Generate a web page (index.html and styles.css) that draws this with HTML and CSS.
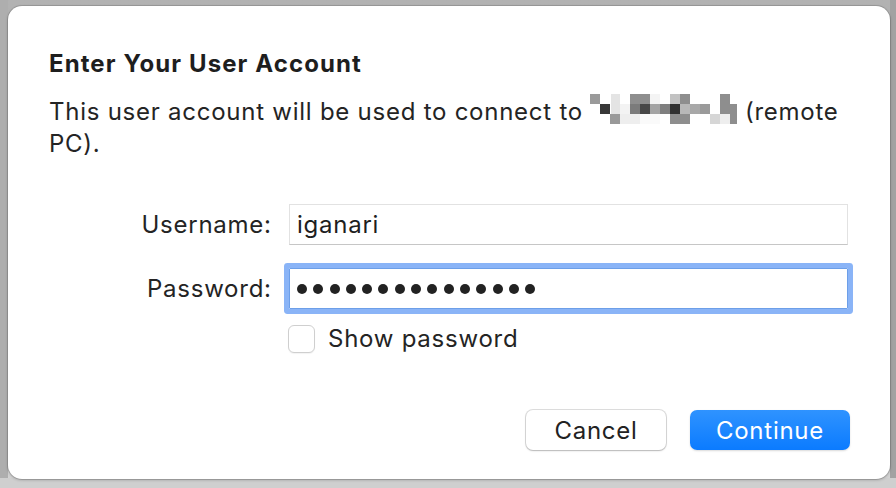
FILE: index.html
```html
<!DOCTYPE html>
<html>
<head>
<meta charset="utf-8">
<link rel="stylesheet" href="styles.css">
</head>
<body>
<div class="backdrop">
  <div class="dialog">
    <h1 class="title">Enter Your User Account</h1>
    <p class="message">This user account will be used to connect to <svg class="mosaic" width="147" height="30" viewBox="0 0 147 30" aria-hidden="true">
      <rect x="0" y="0" width="10" height="10" fill="#9a9a9a"/>
      <rect x="21" y="0" width="9" height="20" fill="#e4e4e4"/>
      <rect x="40" y="0" width="20" height="10" fill="#8e8e8e"/>
      <rect x="60" y="0" width="10" height="10" fill="#f4f4f4"/>
      <rect x="80" y="0" width="10" height="10" fill="#c2c2c2"/>
      <rect x="90" y="0" width="10" height="10" fill="#8e8e8e"/>
      <rect x="130" y="0" width="10" height="20" fill="#8e8e8e"/>
      <rect x="10" y="10" width="10" height="10" fill="#383838"/>
      <rect x="30" y="10" width="10" height="10" fill="#f3f3f3"/>
      <rect x="40" y="10" width="10" height="10" fill="#7b7b7b"/>
      <rect x="50" y="10" width="10" height="10" fill="#474747"/>
      <rect x="60" y="10" width="10" height="10" fill="#a4a4a4"/>
      <rect x="70" y="10" width="10" height="10" fill="#7f7f7f"/>
      <rect x="80" y="10" width="10" height="10" fill="#313131"/>
      <rect x="90" y="10" width="10" height="10" fill="#b8b8b8"/>
      <rect x="100" y="10" width="10" height="10" fill="#a8a8a8"/>
      <rect x="110" y="10" width="10" height="10" fill="#9a9a9a"/>
      <rect x="140" y="10" width="7" height="20" fill="#8e8e8e"/>
      <rect x="20" y="20" width="10" height="10" fill="#999999"/>
      <rect x="30" y="20" width="20" height="10" fill="#eeeeee"/>
      <rect x="50" y="20" width="20" height="10" fill="#fafafa"/>
      <rect x="80" y="20" width="20" height="10" fill="#8e8e8e"/>
      <rect x="120" y="20" width="10" height="10" fill="#d6d6d6"/>
      <rect x="130" y="20" width="10" height="10" fill="#eeeeee"/>
    </svg> (remote PC).</p>

    <div class="form">
      <label class="label">Username:</label>
      <div class="field">iganari</div>

      <label class="label">Password:</label>
      <div class="field field-focus">
        <span class="dot"></span><span class="dot"></span><span class="dot"></span><span class="dot"></span><span class="dot"></span><span class="dot"></span><span class="dot"></span><span class="dot"></span><span class="dot"></span><span class="dot"></span><span class="dot"></span><span class="dot"></span><span class="dot"></span><span class="dot"></span><span class="dot"></span>
      </div>

      <span></span>
      <div class="check-row">
        <span class="checkbox"></span>
        <span class="check-label">Show password</span>
      </div>
    </div>

    <div class="buttons">
      <button class="btn btn-cancel">Cancel</button>
      <button class="btn btn-primary">Continue</button>
    </div>
  </div>
</div>
</body>
</html>
```

FILE: styles.css
```css
* { box-sizing: border-box; }

html, body {
  margin: 0;
  padding: 0;
  width: 896px;
  height: 488px;
  overflow: hidden;
}

body {
  font-family: Inter, "Noto Sans", "Liberation Sans", sans-serif;
  color: #222222;
}

.backdrop {
  width: 896px;
  height: 488px;
  padding: 6px 6px 0 8px;
  background:
    linear-gradient(to bottom, transparent 0, transparent 478px, #cfcfcf 478px),
    linear-gradient(to right, #aeaeae 0, #aeaeae 8px, transparent 8px, transparent 890px, #a2a2a2 890px),
    linear-gradient(to bottom, #b2b2b2 0, #acacac 318px, #8e8e8e 318px, #8e8e8e 380px, #d8d8d8 380px, #d2d2d2 488px);
}

.dialog {
  width: 882px;
  height: 473px;
  background: #ffffff;
  border-radius: 14px;
  box-shadow: 0 0 0 1px rgba(0, 0, 0, 0.12), 0 1px 3px rgba(0, 0, 0, 0.25);
  padding: 44px 40px 29px 41px;
  display: flex;
  flex-direction: column;
}

.title {
  margin: 0;
  font-size: 24px;
  line-height: 28px;
  font-weight: 700;
  letter-spacing: 1.1px;
  color: #1e1e1e;
}

.message {
  margin: 16px 0 0 0;
  max-width: 800px;
  font-size: 24px;
  line-height: 31.5px;
  letter-spacing: 0.75px;
  color: #242424;
}

.mosaic {
  vertical-align: -4px;
}

.form {
  margin-top: 45px;
  display: grid;
  grid-template-columns: 222px 559px;
  column-gap: 18px;
  row-gap: 23px;
  align-items: center;
}

.label {
  font-size: 24px;
  line-height: 41px;
  letter-spacing: 0.75px;
  text-align: right;
  margin-right: -0.75px;
  color: #242424;
}

.field {
  height: 41px;
  border: 1px solid #e2e2e2;
  border-bottom-color: #c6c6c6;
  padding: 0 7px;
  font-size: 24px;
  line-height: 39px;
  letter-spacing: 0.75px;
  color: #1e1e1e;
  display: flex;
  align-items: center;
}

.field-focus {
  border: 1px solid #6d9fe8;
  border-radius: 1px;
  box-shadow: 0 0 0 5px #8ab4f7;
  gap: 6.3px;
}

.dot {
  width: 10px;
  height: 10px;
  border-radius: 50%;
  background: #222222;
}

.check-row {
  margin-top: -7px;
  margin-left: -1px;
  display: flex;
  align-items: center;
  gap: 13px;
}

.checkbox {
  width: 27px;
  height: 28px;
  border: 1px solid #cfcfcf;
  border-radius: 6px;
  background: #ffffff;
  box-shadow: 0 1px 1px rgba(0, 0, 0, 0.05);
}

.check-label {
  font-size: 24px;
  line-height: 28px;
  letter-spacing: 0.75px;
  color: #242424;
}

.buttons {
  margin-top: auto;
  display: flex;
  justify-content: flex-end;
  gap: 24px;
}

.btn {
  height: 40px;
  border-radius: 7px;
  font-family: Inter, "Noto Sans", "Liberation Sans", sans-serif;
  font-size: 24px;
  letter-spacing: 0.75px;
  padding: 0;
  border: none;
}

.btn-cancel {
  width: 140px;
  background: #ffffff;
  color: #222222;
  box-shadow: 0 0 0 1px rgba(0, 0, 0, 0.13), 0 1px 2px rgba(0, 0, 0, 0.18);
}

.btn-primary {
  width: 160px;
  color: #ffffff;
  background: linear-gradient(to bottom, #2f93ff, #0b7bff);
  box-shadow: 0 1px 2px rgba(0, 0, 0, 0.15);
}
```
